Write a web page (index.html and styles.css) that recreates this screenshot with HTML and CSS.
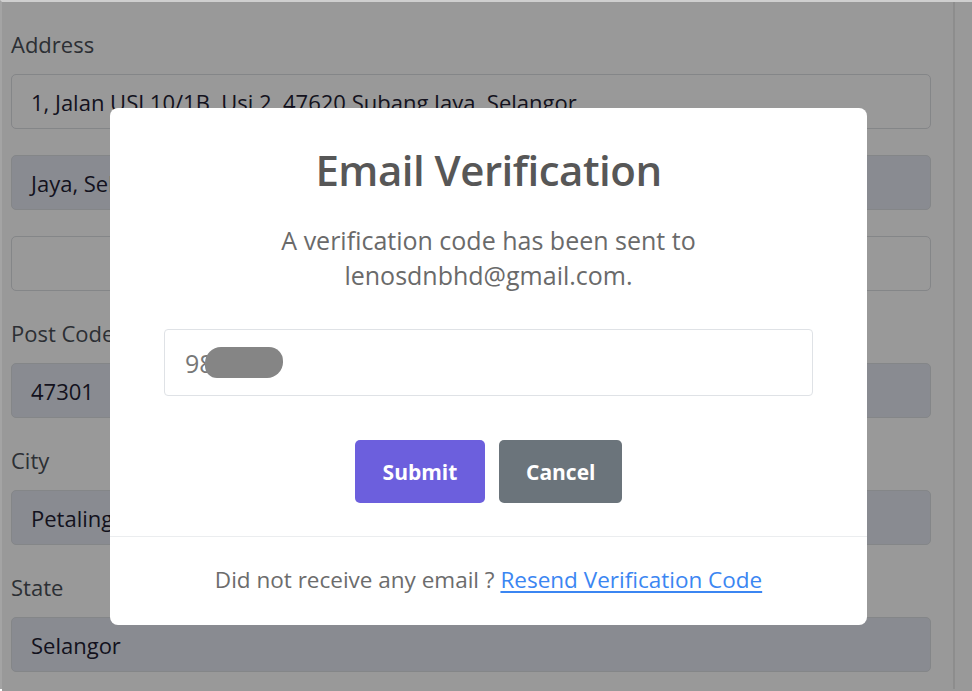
FILE: index.html
```html
<!DOCTYPE html>
<html lang="en">
<head>
<meta charset="utf-8">
<title>Email Verification</title>
<link rel="stylesheet" href="styles.css">
</head>
<body>
<div class="page">
  <form class="form">
    <div class="group">
      <label class="label">Address</label>
      <div class="fields">
        <div class="field">1, Jalan USJ 10/1B, Usj 2, 47620 Subang Jaya, Selangor</div>
        <div class="field field--disabled">Jaya, Selangor</div>
        <div class="field"></div>
      </div>
    </div>
    <div class="group">
      <label class="label">Post Code</label>
      <div class="field field--disabled">47301</div>
    </div>
    <div class="group">
      <label class="label">City</label>
      <div class="field field--disabled">Petaling Jaya</div>
    </div>
    <div class="group">
      <label class="label">State</label>
      <div class="field field--disabled">Selangor</div>
    </div>
  </form>
</div>

<div class="backdrop"></div>

<div class="modal">
  <div class="modal-body">
    <h2 class="modal-title">Email Verification</h2>
    <p class="modal-text">A verification code has been sent to<br>lenosdnbhd@gmail.com.</p>
    <div class="code-input"><span class="code-value">98</span><span class="redact"></span></div>
    <div class="actions">
      <button type="button" class="btn btn--primary">Submit</button>
      <button type="button" class="btn btn--secondary">Cancel</button>
    </div>
  </div>
  <div class="modal-footer">
    <p class="footer-text">Did not receive any email ? <a href="#" class="resend">Resend Verification Code</a></p>
  </div>
</div>
</body>
</html>
```
FILE: styles.css
```css
html, body {
  margin: 0;
  padding: 0;
}

body {
  background: #ffffff;
  font-family: "Open Sans", "Noto Sans", sans-serif;
  border-top: 2px solid #cfcfcf;
  border-left: 2px solid #a4a4a4;
  height: 689px;
  overflow: hidden;
  box-sizing: border-box;
}

.page {
  width: 951px;
  height: 100%;
  border-right: 2px solid #ececec;
  box-sizing: content-box;
}

.form {
  padding: 27px 0 0 9px;
  width: 920px;
}

.group {
  margin-bottom: 27px;
}

.label {
  display: block;
  font-size: 22px;
  line-height: 30px;
  color: #4a4f57;
  margin-bottom: 15px;
}

.fields {
  display: flex;
  flex-direction: column;
  gap: 26px;
}

.field {
  height: 55px;
  box-sizing: border-box;
  border: 1px solid #dcdfe3;
  border-radius: 5px;
  background: #ffffff;
  padding-left: 19px;
  display: flex;
  align-items: center;
  font-size: 22px;
  color: #221d33;
  white-space: nowrap;
  overflow: hidden;
}

.field--disabled {
  background: #e4e8f2;
}

.backdrop {
  position: fixed;
  top: 2px;
  left: 2px;
  right: 0;
  bottom: 0;
  background: rgba(0, 0, 0, 0.4);
}

.modal {
  position: absolute;
  left: 110px;
  top: 108px;
  width: 757px;
  background: #ffffff;
  border-radius: 8px;
  display: flex;
  flex-direction: column;
}

.modal-body {
  padding: 36px 54px 33px;
  display: flex;
  flex-direction: column;
  align-items: stretch;
}

.modal-title {
  margin: 0;
  text-align: center;
  font-size: 42px;
  line-height: 52px;
  font-weight: 600;
  letter-spacing: -0.5px;
  color: #575757;
}

.modal-text {
  margin: 27px 0 0;
  text-align: center;
  font-size: 25px;
  line-height: 35px;
  color: #6a6a6a;
}

.code-input {
  margin-top: 36px;
  height: 67px;
  box-sizing: border-box;
  border: 1px solid #dfe2e6;
  border-radius: 4px;
  padding-left: 20px;
  display: flex;
  align-items: center;
  font-size: 25px;
  color: #777777;
}

.redact {
  display: inline-block;
  width: 78px;
  height: 31px;
  margin-left: -9px;
  border-radius: 16px 14px 16px 12px;
  background: #858585;
}

.actions {
  margin-top: 44px;
  display: flex;
  justify-content: center;
  gap: 14px;
}

.btn {
  height: 63px;
  padding: 0 27px;
  border: 0;
  border-radius: 5px;
  font-family: "Open Sans", "Noto Sans", sans-serif;
  font-size: 21px;
  font-weight: 700;
  color: #ffffff;
}

.btn--primary {
  background: #6c5fdd;
  width: 130px;
}

.btn--secondary {
  background: #6b747b;
  width: 123px;
}

.modal-footer {
  border-top: 1px solid #ebedef;
  height: 89px;
  box-sizing: border-box;
  padding-bottom: 3px;
  display: flex;
  align-items: center;
  justify-content: center;
}

.footer-text {
  margin: 0;
  text-align: center;
  font-size: 22.5px;
  line-height: 30px;
  color: #6c6c6c;
}

.resend {
  color: #3b86f2;
  text-decoration: underline;
  text-underline-offset: 3px;
}
```
